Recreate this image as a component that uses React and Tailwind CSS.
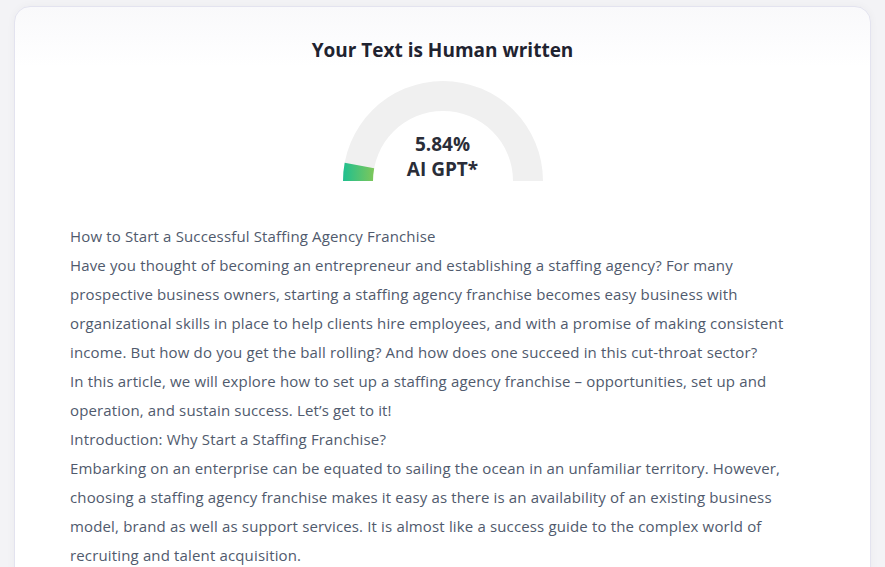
import React from "react";

const paragraphs = [
  "How to Start a Successful Staffing Agency Franchise",
  "Have you thought of becoming an entrepreneur and establishing a staffing agency? For many prospective business owners, starting a staffing agency franchise becomes easy business with organizational skills in place to help clients hire employees, and with a promise of making consistent income. But how do you get the ball rolling? And how does one succeed in this cut-throat sector?",
  "In this article, we will explore how to set up a staffing agency franchise – opportunities, set up and operation, and sustain success. Let’s get to it!",
  "Introduction: Why Start a Staffing Franchise?",
  "Embarking on an enterprise can be equated to sailing the ocean in an unfamiliar territory. However, choosing a staffing agency franchise makes it easy as there is an availability of an existing business model, brand as well as support services. It is almost like a success guide to the complex world of recruiting and talent acquisition.",
];

function Gauge({ percent }) {
  const cx = 100;
  const cy = 100;
  const R = 100;
  const r = 70;
  const a = Math.PI * (1 - percent / 100);
  const ox = cx + R * Math.cos(a);
  const oy = cy - R * Math.sin(a);
  const ix = cx + r * Math.cos(a);
  const iy = cy - r * Math.sin(a);

  return (
    <svg width="200" height="100" viewBox="0 0 200 100">
      <defs>
        <linearGradient id="g" x1="0" y1="0" x2="1" y2="0">
          <stop offset="0%" stopColor="#1fbf8f" />
          <stop offset="100%" stopColor="#7ec75a" />
        </linearGradient>
      </defs>
      <path
        d={`M0 100 A100 100 0 0 1 200 100 L170 100 A70 70 0 0 0 30 100 Z`}
        fill="#f0f0f0"
      />
      <path
        d={`M0 100 A100 100 0 0 1 ${ox} ${oy} L${ix} ${iy} A70 70 0 0 0 30 100 Z`}
        fill="url(#g)"
      />
    </svg>
  );
}

export default function App() {
  return (
    <div
      className="min-h-screen bg-[#f3f3f6] px-[14px] pt-[6px]"
      style={{ fontFamily: '"Open Sans", "Noto Sans", sans-serif' }}
    >
      <div className="rounded-[16px] border border-[#e3e3ef] bg-gradient-to-b from-[#f9f9fb] to-white to-[60px] shadow-[0_0_8px_rgba(0,0,0,0.04)] px-[55px] pt-[28px] pb-8">
        <h1 className="text-center text-[19px] font-bold text-[#1f2330] leading-[30px]">
          Your Text is Human written
        </h1>

        <div className="relative mx-auto mt-[16px] w-[200px] h-[100px]">
          <Gauge percent={5.84} />
          <div className="absolute inset-x-0 top-[51px] flex flex-col items-center text-[19px] font-bold text-[#2a2d38] leading-[25px]">
            <span>5.84%</span>
            <span>AI GPT*</span>
          </div>
        </div>

        <div className="mt-[41px] text-[15px] tracking-[0.15px] leading-[29px] text-[#505a6d] max-w-[725px]">
          {paragraphs.map((p, i) => (
            <p key={i}>{p}</p>
          ))}
        </div>
      </div>
    </div>
  );
}
